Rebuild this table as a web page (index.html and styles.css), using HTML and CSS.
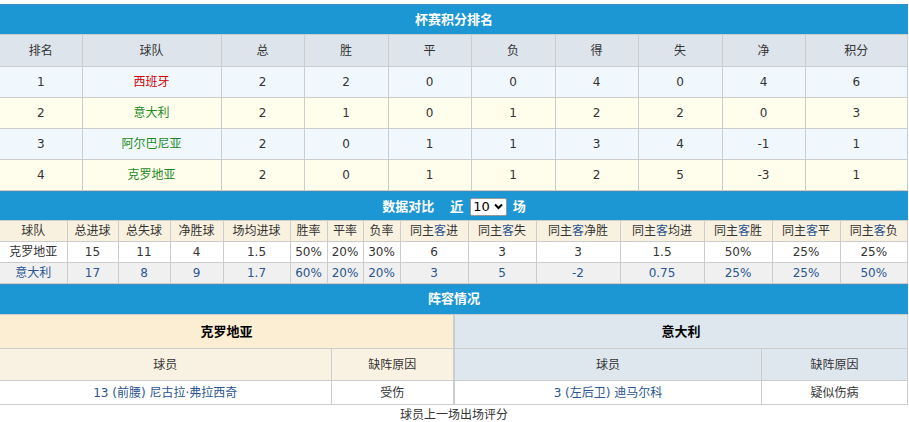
FILE: index.html
```html
<!DOCTYPE html>
<html lang="zh">
<head>
<meta charset="utf-8">
<link rel="stylesheet" href="styles.css">
</head>
<body>
<div class="wrap">
  <div class="bar">杯赛积分排名</div>
  <table class="rank">
    <colgroup>
      <col style="width:82px"><col style="width:139px"><col style="width:83px"><col style="width:84px"><col style="width:83px"><col style="width:84px"><col style="width:83px"><col style="width:84px"><col style="width:83px"><col>
    </colgroup>
    <tr class="head"><td>排名</td><td>球队</td><td>总</td><td>胜</td><td>平</td><td>负</td><td>得</td><td>失</td><td>净</td><td>积分</td></tr>
    <tr class="odd"><td>1</td><td class="red">西班牙</td><td>2</td><td>2</td><td>0</td><td>0</td><td>4</td><td>0</td><td>4</td><td>6</td></tr>
    <tr class="even"><td>2</td><td class="green">意大利</td><td>2</td><td>1</td><td>0</td><td>1</td><td>2</td><td>2</td><td>0</td><td>3</td></tr>
    <tr class="odd"><td>3</td><td class="green">阿尔巴尼亚</td><td>2</td><td>0</td><td>1</td><td>1</td><td>3</td><td>4</td><td>-1</td><td>1</td></tr>
    <tr class="even"><td>4</td><td class="green">克罗地亚</td><td>2</td><td>0</td><td>1</td><td>1</td><td>2</td><td>5</td><td>-3</td><td>1</td></tr>
  </table>

  <div class="bar bar2">
    <span class="title">数据对比</span>
    <span class="near">近</span>
    <span class="sel">10<svg width="9" height="7" viewBox="0 0 9 7"><path d="M1 1.5 L4.5 5 L8 1.5" fill="none" stroke="#000" stroke-width="2"/></svg></span>
    <span>场</span>
  </div>
  <table class="data">
    <colgroup>
      <col style="width:67px"><col style="width:51px"><col style="width:52px"><col style="width:53px"><col style="width:67px"><col style="width:37px"><col style="width:36px"><col style="width:37px"><col style="width:68px"><col style="width:68px"><col style="width:84px"><col style="width:84px"><col style="width:68px"><col style="width:68px"><col>
    </colgroup>
    <tr class="dhead"><td>球队</td><td>总进球</td><td>总失球</td><td>净胜球</td><td>场均进球</td><td>胜率</td><td>平率</td><td>负率</td><td>同主<span class="b">客</span>进</td><td>同主<span class="b">客</span>失</td><td>同主<span class="b">客</span>净胜</td><td>同主<span class="b">客</span>均进</td><td>同主<span class="b">客</span>胜</td><td>同主<span class="b">客</span>平</td><td>同主<span class="b">客</span>负</td></tr>
    <tr class="d1"><td>克罗地亚</td><td>15</td><td>11</td><td>4</td><td>1.5</td><td>50%</td><td>20%</td><td>30%</td><td>6</td><td>3</td><td>3</td><td>1.5</td><td>50%</td><td>25%</td><td>25%</td></tr>
    <tr class="d2"><td>意大利</td><td>17</td><td>8</td><td>9</td><td>1.7</td><td>60%</td><td>20%</td><td>20%</td><td>3</td><td>5</td><td>-2</td><td>0.75</td><td>25%</td><td>25%</td><td>50%</td></tr>
  </table>

  <div class="bar bar3">阵容情况</div>
  <div class="lineup">
    <table class="team home">
      <colgroup><col style="width:331px"><col></colgroup>
      <tr class="tname"><td colspan="2">克罗地亚</td></tr>
      <tr class="thead"><td>球员</td><td>缺阵原因</td></tr>
      <tr class="trow"><td class="pl">13 (前腰) 尼古拉·弗拉西奇</td><td>受伤</td></tr>
    </table>
    <table class="team away">
      <colgroup><col style="width:307px"><col></colgroup>
      <tr class="tname"><td colspan="2">意大利</td></tr>
      <tr class="thead"><td>球员</td><td>缺阵原因</td></tr>
      <tr class="trow"><td class="pl">3 (左后卫) 迪马尔科</td><td>疑似伤病</td></tr>
    </table>
  </div>
  <div class="foot">球员上一场出场评分</div>
</div>
</body>
</html>
```

FILE: styles.css
```css
html, body {
  margin: 0;
  padding: 0;
  background: #fff;
}
body {
  font-family: "DejaVu Sans", "Noto Sans CJK SC", sans-serif;
  font-size: 12px;
  color: #333;
}
.wrap {
  width: 908px;
  padding-top: 4px;
}
.bar {
  background: #1d96d4;
  color: #fff;
  font-weight: bold;
  font-size: 13px;
  height: 30px;
  line-height: 16px;
  display: flex;
  align-items: center;
  justify-content: center;
  border-top: 1px solid #3a8fc0;
  box-sizing: border-box;
}
.bar2 {
  gap: 6px;
  height: 29px;
  padding-top: 1px;
}
.bar2 .title {
  margin-right: 10px;
}
.near {
  text-decoration: underline;
}
.sel {
  display: inline-flex;
  align-items: center;
  gap: 4px;
  background: #fff;
  color: #000;
  font-weight: normal;
  font-size: 13px;
  height: 16px;
  padding: 0 3px 0 2px;
  border: 1px solid #999;
  border-radius: 2px;
  margin-left: 1px;
}
.bar3 {
  height: 30px;
  padding-bottom: 1px;
}
table {
  border-collapse: collapse;
  table-layout: fixed;
  width: 908px;
}
td {
  border: 1px solid #ccc;
  text-align: center;
  padding: 0;
  white-space: nowrap;
  overflow: hidden;
  line-height: 16px;
}
.rank td {
  height: 30px;
}
.rank tr.head td {
  background: #dde4ec;
  height: 31px;
}
.rank tr.odd td { background: #f0f8fe; }
.rank tr.even td { background: #fffeec; }
.rank tr td:first-child { border-left: none; }
.red { color: #cc0000; }
.green { color: #1c8a1c; }

.data td {
  height: 20px;
  font-size: 12px;
}
.data tr td:first-child { border-left: none; }
.dhead td { background: #f9f1df; color: #333; }
.d1 td { background: #fff; }
.d2 td { background: #f0f0f0; color: #2a5590; }
.b { color: #2a5590; }

.lineup {
  display: flex;
}
.team {
  width: 454px;
}
.tname td {
  height: 33px;
  font-weight: bold;
  font-size: 13px;
  color: #000;
}
.home .tname td { background: #fbeed3; border-left: none; }
.away .tname td { background: #dee6ee; }
.thead td { height: 31px; }
.home .thead td { background: #f9f1e1; }
.home .thead td:first-child { border-left: none; }
.away .thead td { background: #dee6ee; }
.trow td { height: 23px; background: #fff; }
.home .trow td:first-child { border-left: none; }
.pl { color: #2a5590; }
.foot {
  text-align: center;
  padding-top: 3px;
  color: #333;
  line-height: 15px;
}
```
